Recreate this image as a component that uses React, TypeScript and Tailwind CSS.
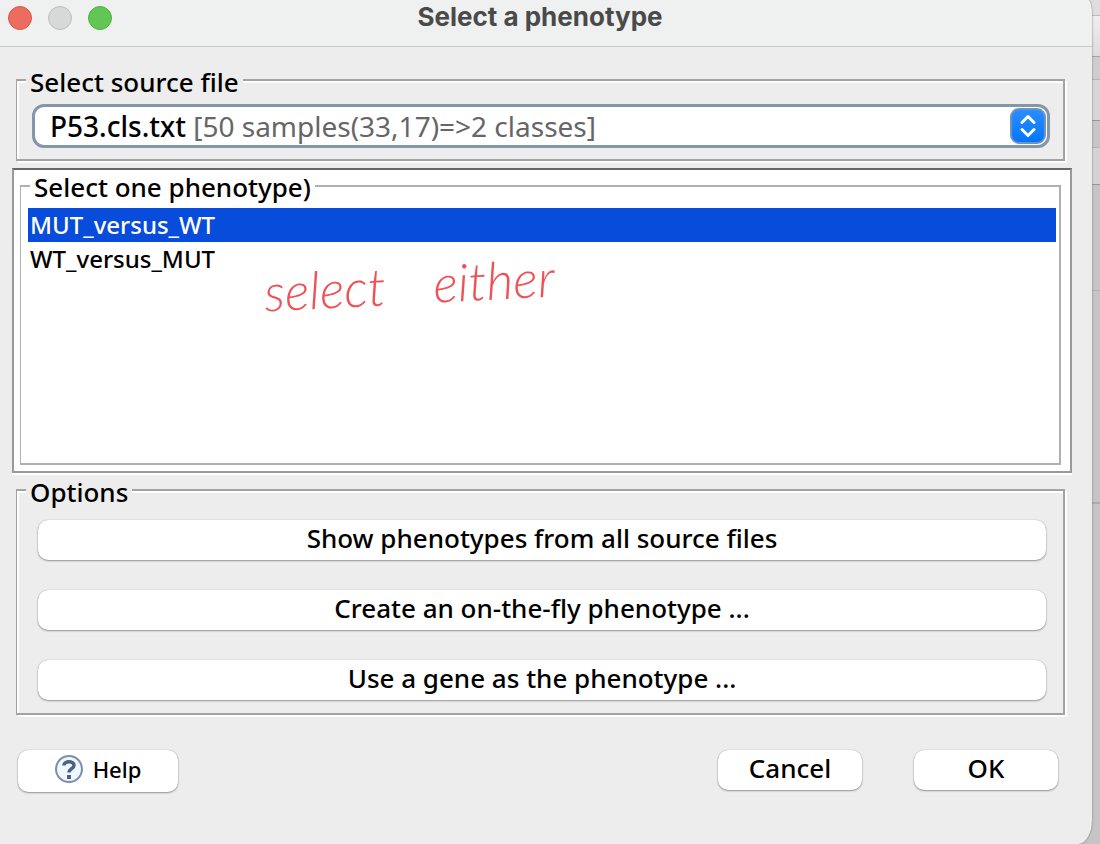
import { useState, type ReactNode } from "react";

const sources = ["P53.cls.txt [50 samples(33,17)=>2 classes]"];
const phenotypes = ["MUT_versus_WT", "WT_versus_MUT"];
const actions = [
  "Show phenotypes from all source files",
  "Create an on-the-fly phenotype ...",
  "Use a gene as the phenotype ...",
];

const buttonFace =
  "flex items-center justify-center rounded-[10px] bg-white pb-1 shadow-[0_0_1px_rgba(0,0,0,0.35),0_1px_2px_rgba(0,0,0,0.35)]";

function EtchedGroup({ title, children }: { title: string; children: ReactNode }) {
  return (
    <fieldset className="ml-4 mr-[27px] min-w-0 border-2 border-l border-[#a3a3a3] shadow-[2px_2px_0_#fff,inset_2px_2px_0_#fff]">
      <legend className="ml-[9px] bg-[#ededed] px-1 pt-1 text-[26px] leading-[30px]">{title}</legend>
      {children}
    </fieldset>
  );
}

function SourceSelect() {
  return (
    <div className="relative ml-[15px] mr-[13px] mt-[7px] mb-[11px] flex h-11 items-center rounded-xl border-3 border-[#8496aa] bg-white pl-[15px] pr-px">
      <span aria-hidden="true" className="flex-1 text-[28px] leading-[38px] whitespace-nowrap">
        P53.cls.txt <span className="font-normal text-[#666]">[50 samples(33,17)=&gt;2 classes]</span>
      </span>
      <span className="flex size-9 items-center justify-center rounded-[9px] border-2 border-[#6f93bd] bg-linear-to-b from-[#2a8dff] to-[#0075ff]">
        <svg viewBox="0 0 32 32" className="size-8" fill="none" stroke="#fff" strokeWidth="3" strokeLinecap="round" strokeLinejoin="round">
          <path d="M10 12.5 16 6.5l6 6M10 19.5l6 6 6-6" />
        </svg>
      </span>
      <select aria-label="Source file" className="absolute inset-0 w-full cursor-pointer opacity-0">
        {sources.map((s) => (
          <option key={s}>{s}</option>
        ))}
      </select>
    </div>
  );
}

function PhenotypeList() {
  const [selected, setSelected] = useState(phenotypes[0]);
  return (
    <section className="relative ml-3 mr-5 mt-[7px] flex flex-1 flex-col border-2 border-[#999] border-t-[#6a6768] bg-white px-[6px] pb-[6px] pr-[9px] shadow-[0_2px_0_#fff]">
      <fieldset className="min-w-0 flex-1 border-2 border-l border-[#b0b0b0]">
        <legend className="ml-[9px] bg-white px-1 pt-[2px] text-[26px] leading-[30px]">Select one phenotype)</legend>
        <div role="listbox" aria-label="Phenotypes" className="ml-[7px] mr-[3px] mt-[6px] flex flex-col">
          {phenotypes.map((name) => (
            <button
              key={name}
              type="button"
              role="option"
              aria-selected={selected === name}
              onClick={() => setSelected(name)}
              className={
                selected === name
                  ? "h-[34px] bg-[#084cdc] px-[2px] text-left text-2xl leading-[34px] text-white"
                  : "h-[34px] px-[2px] text-left text-2xl leading-[34px]"
              }
            >
              {name}
            </button>
          ))}
        </div>
      </fieldset>
      <p className="pointer-events-none absolute left-[250px] top-[84px] flex -rotate-3 gap-12 font-[Lato,sans-serif] text-[52px] leading-[60px] font-light text-[#ee5257] italic">
        <span>select</span>
        <span>either</span>
      </p>
    </section>
  );
}

function Backdrop() {
  return (
    <div className="absolute inset-y-0 right-0 flex w-10 flex-col bg-[#c5c5c5]" aria-hidden="true">
      <div className="h-4 border-b border-[#bcbcbc] bg-[#dedede]" />
      <div className="h-[41px] border-b border-[#a3a3a3] bg-linear-to-b from-[#eeeeee] to-[#dcdcdc]" />
      <div className="h-[23px] border-b border-[#b4b4b4] bg-[#cdcdcd]" />
      <div className="h-[41px] border-b border-[#989898] bg-[#d6d6d6]" />
      <div className="h-[27px] border-b border-[#b4b4b4] bg-[#c6c6c6]" />
      <div className="h-[37px] border-b border-[#989898] bg-[#d3d3d3]" />
      <div className="h-[106px] border-b border-[#b0b0b0]" />
      <div className="h-[213px] border-b-2 border-[#acacac]" />
    </div>
  );
}

export default function App() {
  return (
    <div className="relative flex min-h-screen bg-[#c5c5c5] font-['Noto_Sans',sans-serif] font-medium text-black">
      <Backdrop />
      <main className="relative mr-2 flex min-w-0 flex-1 flex-col overflow-hidden rounded-tr-[4px_16px] rounded-br-[14px_24px] bg-[#ededed] shadow-[0_0_2px_#666]">
        <header className="relative flex h-[47px] items-start border-b border-[#c6caca] bg-[#eff1f0] pl-2 pt-[6px]">
          <div className="flex gap-4">
            <button type="button" aria-label="Close" className="size-6 rounded-full border border-[#d8574c] bg-[#ed6b5f]" />
            <button type="button" aria-label="Minimize" className="size-6 rounded-full border border-[#bdbfbe] bg-[#d7d9d8]" />
            <button type="button" aria-label="Zoom" className="size-6 rounded-full border border-[#53ad43] bg-[#62c655]" />
          </div>
          <h1 className="mr-[124px] flex-1 text-center font-[Inter,sans-serif] text-[26px] leading-[22px] font-bold text-[#4a4a4a]">
            Select a phenotype
          </h1>
        </header>
        <form className="flex flex-1 flex-col pt-4" onSubmit={(e) => e.preventDefault()}>
          <EtchedGroup title="Select source file">
            <SourceSelect />
          </EtchedGroup>
          <PhenotypeList />
          <EtchedGroup title="Options">
            <div className="mr-[17px] ml-[21px] mt-[13px] mb-[13px] flex flex-col gap-[30px]">
              {actions.map((label) => (
                <button key={label} type="button" className={`${buttonFace} h-10 text-[26px] leading-[34px]`}>
                  {label}
                </button>
              ))}
            </div>
          </EtchedGroup>
          <footer className="mt-[35px] mr-[34px] mb-[52px] ml-[18px] flex items-start">
            <button type="button" className={`${buttonFace} h-[42px] w-40 gap-[10px] text-[22px] leading-[30px]`}>
              <svg viewBox="0 0 28 28" className="size-7" fill="none">
                <circle cx="14" cy="14" r="13" fill="#f1f7ff" stroke="#7d90aa" strokeWidth="2" />
                <path d="M9 10.500C9 5.500 19 5.500 19 10.500c0 3-5 3.500-5 7" stroke="#4a6288" strokeWidth="3.500" />
                <path d="M12 20h4v4h-4z" fill="#4a6288" />
              </svg>
              Help
            </button>
            <button type="button" className={`${buttonFace} ml-auto h-10 w-36 text-[26px] leading-[34px]`}>
              Cancel
            </button>
            <button type="submit" className={`${buttonFace} ml-[52px] h-10 w-36 text-[26px] leading-[34px]`}>
              OK
            </button>
          </footer>
        </form>
      </main>
    </div>
  );
}
